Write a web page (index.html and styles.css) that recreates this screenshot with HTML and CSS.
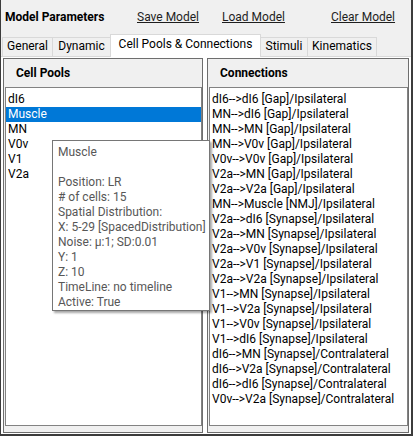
FILE: index.html
```html
<!DOCTYPE html>
<html>
<head>
<meta charset="utf-8">
<link rel="stylesheet" href="styles.css">
</head>
<body>
<div class="window">
  <div class="toolbar">
    <span class="title">Model Parameters</span>
    <a class="link">Save Model</a>
    <a class="link">Load Model</a>
    <a class="link">Clear Model</a>
  </div>
  <div class="tabs">
    <div class="tab t-general">General</div>
    <div class="tab t-dynamic">Dynamic</div>
    <div class="tab t-cells active">Cell Pools &amp; Connections</div>
    <div class="tab t-stimuli">Stimuli</div>
    <div class="tab t-kin">Kinematics</div>
  </div>
  <div class="page">
    <section class="group g-left">
      <div class="group-head">Cell Pools</div>
      <ul class="list">
        <li>dI6</li>
        <li class="selected">Muscle</li>
        <li>MN</li>
        <li>V0v</li>
        <li>V1</li>
        <li>V2a</li>
      </ul>
    </section>
    <section class="group g-right">
      <div class="group-head">Connections</div>
      <ul class="list">
        <li>dI6--&gt;dI6 [Gap]/Ipsilateral</li>
        <li>MN--&gt;dI6 [Gap]/Ipsilateral</li>
        <li>MN--&gt;MN [Gap]/Ipsilateral</li>
        <li>MN--&gt;V0v [Gap]/Ipsilateral</li>
        <li>V0v--&gt;V0v [Gap]/Ipsilateral</li>
        <li>V2a--&gt;MN [Gap]/Ipsilateral</li>
        <li>V2a--&gt;V2a [Gap]/Ipsilateral</li>
        <li>MN--&gt;Muscle [NMJ]/Ipsilateral</li>
        <li>V2a--&gt;dI6 [Synapse]/Ipsilateral</li>
        <li>V2a--&gt;MN [Synapse]/Ipsilateral</li>
        <li>V2a--&gt;V0v [Synapse]/Ipsilateral</li>
        <li>V2a--&gt;V1 [Synapse]/Ipsilateral</li>
        <li>V2a--&gt;V2a [Synapse]/Ipsilateral</li>
        <li>V1--&gt;MN [Synapse]/Ipsilateral</li>
        <li>V1--&gt;V2a [Synapse]/Ipsilateral</li>
        <li>V1--&gt;V0v [Synapse]/Ipsilateral</li>
        <li>V1--&gt;dI6 [Synapse]/Ipsilateral</li>
        <li>dI6--&gt;MN [Synapse]/Contralateral</li>
        <li>dI6--&gt;V2a [Synapse]/Contralateral</li>
        <li>dI6--&gt;dI6 [Synapse]/Contralateral</li>
        <li>V0v--&gt;V2a [Synapse]/Contralateral</li>
      </ul>
    </section>
  </div>
  <div class="tooltip">
    <div>Muscle</div>
    <div>&nbsp;</div>
    <div>Position: LR</div>
    <div># of cells: 15</div>
    <div>Spatial Distribution:</div>
    <div>X: 5-29 [SpacedDistribution]</div>
    <div>Noise: µ:1; SD:0.01</div>
    <div>Y: 1</div>
    <div>Z: 10</div>
    <div>TimeLine: no timeline</div>
    <div>Active: True</div>
  </div>
</div>
</body>
</html>
```

FILE: styles.css
```css
* { box-sizing: border-box; }
html, body {
  margin: 0;
  padding: 0;
  background: #ffffff;
}
body {
  font-family: Roboto, "Noto Sans", sans-serif;
  font-size: 12px;
  color: #000;
}
.window {
  position: relative;
  width: 413px;
  height: 436px;
  background: #f0f0f0;
  border-left: 1px solid #3c3c3c;
  border-right: 2px solid #3c3c3c;
  border-bottom: 2px solid #3c3c3c;
  display: flex;
  flex-direction: column;
  overflow: hidden;
}
.toolbar {
  height: 34px;
  display: grid;
  grid-template-columns: 136px 85px 109px auto;
  align-items: center;
  padding-bottom: 1px;
}
.title {
  font-weight: bold;
  padding-left: 4px;
}
.link {
  color: #1e1e1e;
  text-decoration: underline;
}
.tabs {
  height: 22px;
  display: flex;
  align-items: flex-end;
  padding-left: 1px;
}
.tab {
  height: 19px;
  line-height: 17px;
  border: 1px solid #d9d9d9;
  border-bottom: none;
  background: #f0f0f0;
  text-align: center;
  margin-right: -1px;
}
.tab.active {
  line-height: 19px;
  background: #ffffff;
  position: relative;
  z-index: 1;
  margin-bottom: -1px;
  height: 23px;
}
.t-general { width: 51px; }
.t-dynamic { width: 59px; }
.t-cells { width: 151px; }
.t-stimuli { width: 48px; }
.t-kin { width: 70px; }
.page {
  flex: 1;
  background: #ffffff;
  border-top: 1px solid #d9d9d9;
  display: flex;
  gap: 4px;
  padding: 1px 1px 1px 2px;
}
.group {
  border: 1px solid #6e6e6e;
  background: #f0f0f0;
  display: flex;
  flex-direction: column;
  padding: 0 0 6px 1px;
}
.g-left { width: 200px; }
.g-right { width: 202px; }
.group-head {
  height: 28px;
  line-height: 28px;
  padding-left: 11px;
  font-weight: bold;
}
.list {
  flex: 1;
  margin: 0;
  padding: 4px 0 0 0;
  list-style: none;
  background: #ffffff;
  border: 1px solid #828282;
}
.list li {
  height: 15px;
  line-height: 15px;
  padding-left: 2px;
  white-space: nowrap;
}
.list li.selected {
  background: #0078d7;
  color: #ffffff;
}
.tooltip {
  position: absolute;
  left: 51px;
  top: 140px;
  width: 158px;
  height: 171px;
  background: #ffffff;
  border: 1px solid #767676;
  box-shadow: 2px 2px 2px rgba(0,0,0,0.35);
  padding: 4px 0 0 5px;
  color: #575757;
  z-index: 5;
}
.tooltip div {
  height: 15px;
  line-height: 15px;
  white-space: nowrap;
}
```
